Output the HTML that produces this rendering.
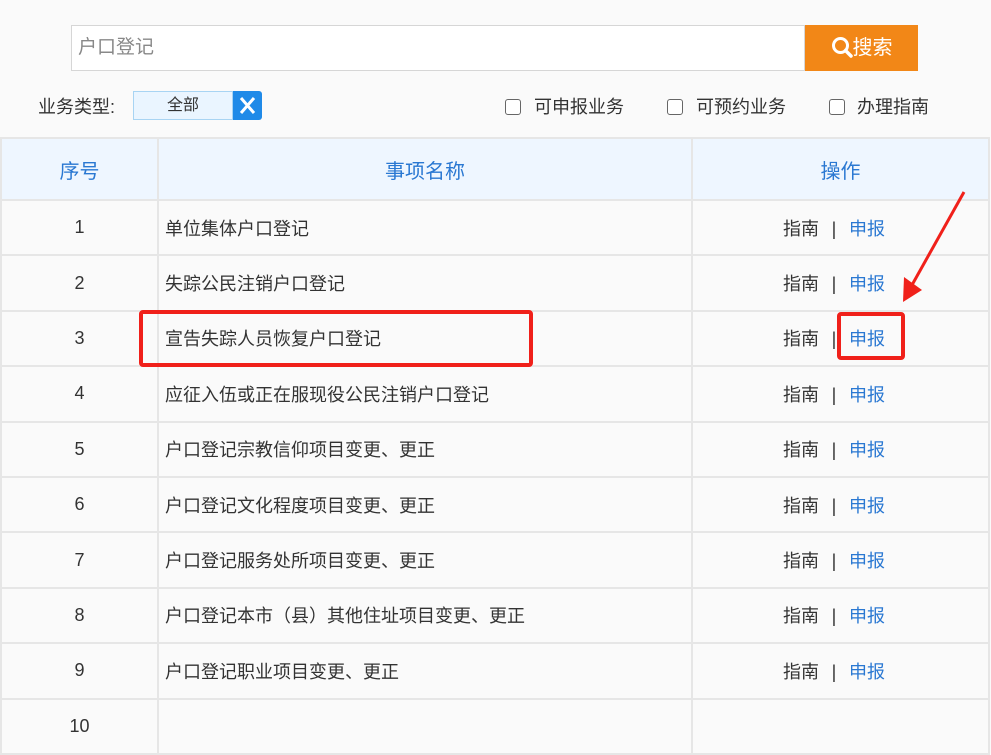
<!DOCTYPE html><html><head><meta charset="utf-8"><style>
body{margin:0;width:991px;height:703px;overflow:hidden;background:#fafafa;font-family:"Liberation Sans","Noto Sans CJK SC",sans-serif;position:relative}
.a{position:absolute}
.inp{left:71px;top:25px;width:734px;height:46px;border:1px solid #d6d6d6;background:#fff;box-sizing:border-box;font-size:19px;color:#888;line-height:44px;padding-left:6px}
.btn{left:805px;top:25px;width:113px;height:46px;background:#f28717;color:#fff;font-size:20px;line-height:46px;text-align:center}
.lbl{font-size:18px;color:#333;top:93px}
.cb{width:14px;height:14px;border:1px solid #666;border-radius:3px;top:99px;background:#fff}
table{position:absolute;left:0;top:137px;border-collapse:collapse;width:990px;border-top:2px solid #1e6fd0}
td{border:2px solid #e6e6e6;font-size:18px;color:#333;height:53.4px;padding:0}
tr.h td{background:#eef6ff;color:#2a78d2;font-size:20px;text-align:center;height:60px}
tr:nth-child(odd):not(.h) td{background:#fafafa}
td.c{text-align:center}
td.n{padding-left:6px}
td.o{padding-left:90px}
.l{color:#2a78d2}
.s{display:inline-block;width:30px;text-align:center}
</style></head><body>
<div class="a inp">户口登记</div>
<div class="a btn"><svg width="22" height="22" viewBox="0 0 22 22" style="vertical-align:-4px"><circle cx="9.5" cy="9.5" r="7" fill="none" stroke="#fff" stroke-width="3"/><path d="M14.5 14.5L20 20" stroke="#fff" stroke-width="3.5" stroke-linecap="round"/></svg>搜索</div>
<div class="a lbl" style="left:38px">业务类型:</div>
<div class="a" style="left:133px;top:91px;width:100px;height:29px;border:1px solid #a8d4f3;background:#eaf5ff;box-sizing:border-box;font-size:16px;color:#333;text-align:center;line-height:27px">全部</div>
<div class="a" style="left:233px;top:91px;width:29px;height:29px;background:#1f8ae8;border-radius:0 3px 3px 0"><svg width="29" height="29"><path d="M8 7L21 22M21 7L8 22" stroke="#fff" stroke-width="3"/></svg></div>
<div class="a cb" style="left:505px"></div><div class="a lbl" style="left:534px">可申报业务</div>
<div class="a cb" style="left:667px"></div><div class="a lbl" style="left:696px">可预约业务</div>
<div class="a cb" style="left:829px"></div><div class="a lbl" style="left:857px">办理指南</div>
<table>
<tr class="h"><td style="width:155px">序号</td><td style="width:532px">事项名称</td><td>操作</td></tr>
<tr><td class="c">1</td><td class="n">单位集体户口登记</td><td class="o">指南<span class="s">|</span><span class="l">申报</span></td></tr>
<tr><td class="c">2</td><td class="n">失踪公民注销户口登记</td><td class="o">指南<span class="s">|</span><span class="l">申报</span></td></tr>
<tr><td class="c">3</td><td class="n">宣告失踪人员恢复户口登记</td><td class="o">指南<span class="s">|</span><span class="l">申报</span></td></tr>
<tr><td class="c">4</td><td class="n">应征入伍或正在服现役公民注销户口登记</td><td class="o">指南<span class="s">|</span><span class="l">申报</span></td></tr>
<tr><td class="c">5</td><td class="n">户口登记宗教信仰项目变更、更正</td><td class="o">指南<span class="s">|</span><span class="l">申报</span></td></tr>
<tr><td class="c">6</td><td class="n">户口登记文化程度项目变更、更正</td><td class="o">指南<span class="s">|</span><span class="l">申报</span></td></tr>
<tr><td class="c">7</td><td class="n">户口登记服务处所项目变更、更正</td><td class="o">指南<span class="s">|</span><span class="l">申报</span></td></tr>
<tr><td class="c">8</td><td class="n">户口登记本市（县）其他住址项目变更、更正</td><td class="o">指南<span class="s">|</span><span class="l">申报</span></td></tr>
<tr><td class="c">9</td><td class="n">户口登记职业项目变更、更正</td><td class="o">指南<span class="s">|</span><span class="l">申报</span></td></tr>
<tr><td class="c">10</td><td class="n"></td><td class="c"></td></tr>
</table>
<div class="a" style="left:139px;top:310px;width:394px;height:57px;border:4px solid #f0201a;border-radius:4px;box-sizing:border-box"></div>
<div class="a" style="left:837px;top:312px;width:68px;height:48px;border:4px solid #f0201a;border-radius:4px;box-sizing:border-box"></div>
<svg class="a" style="left:0;top:0" width="991" height="703"><path d="M964 192L912 285" stroke="#f0201a" stroke-width="3"/><path d="M903 302L904 277L922 290Z" fill="#f0201a"/></svg>
</body></html>
